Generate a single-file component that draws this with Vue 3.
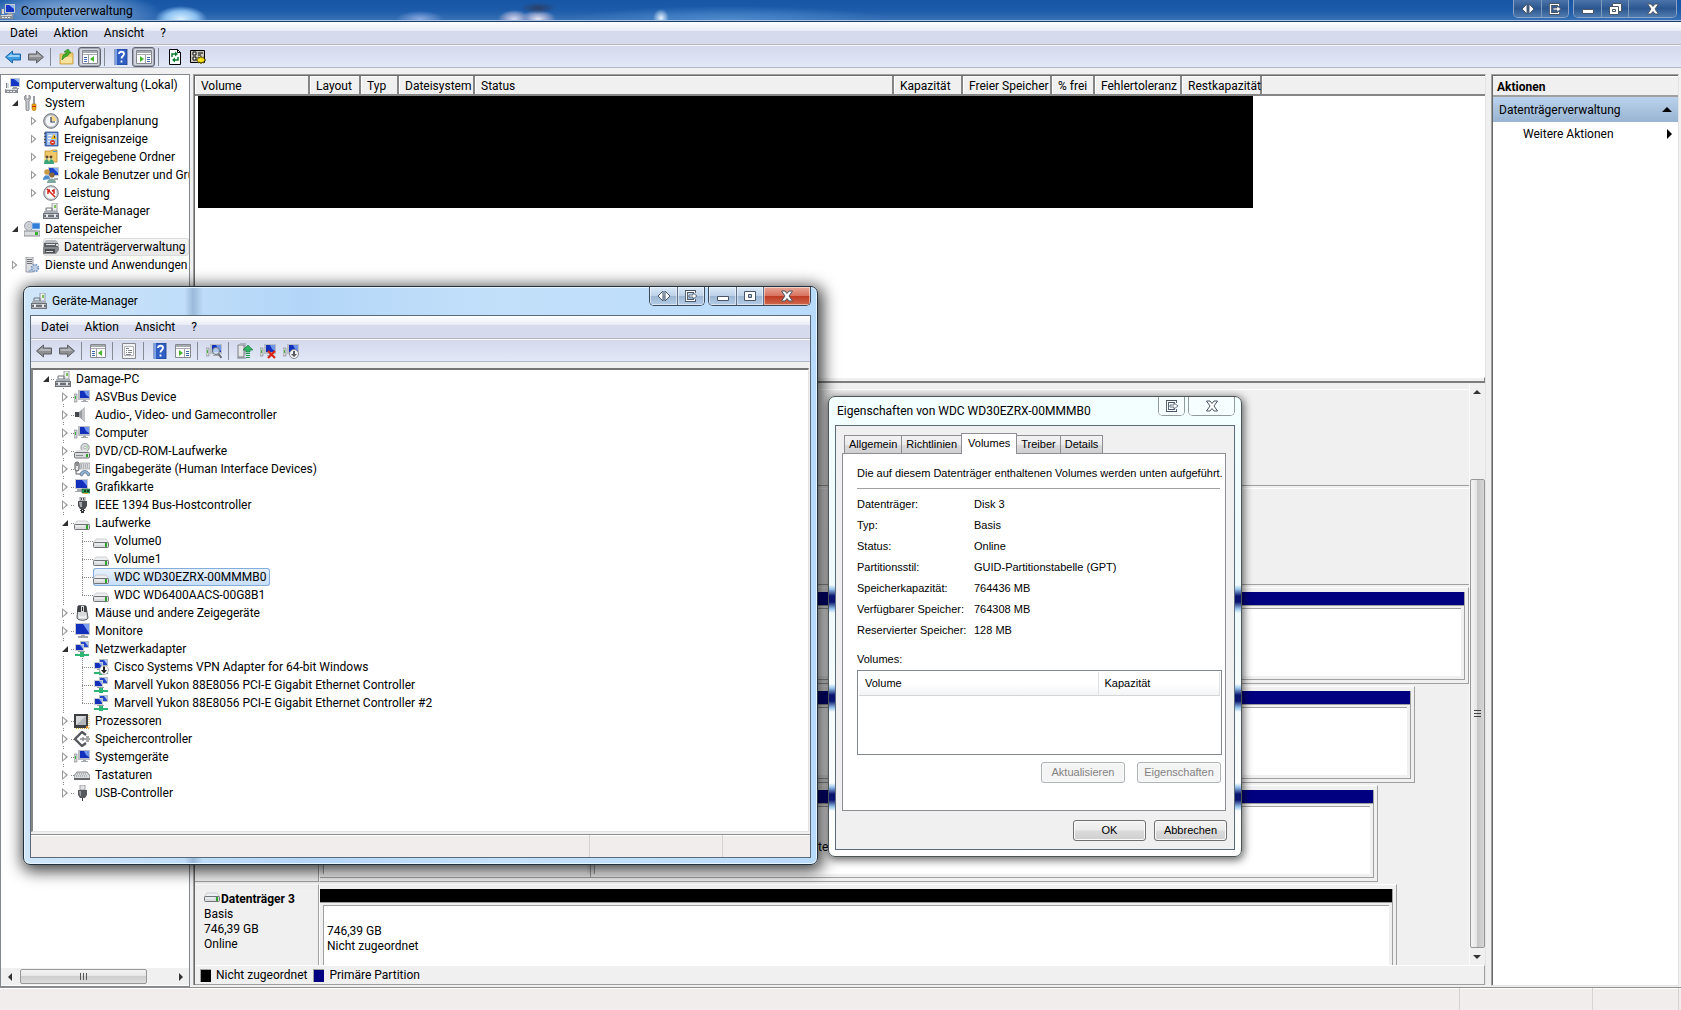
<template>
  <div class="desktop">
    <!-- Icon definitions -->
    <svg class="defs" aria-hidden="true">
      <symbol id="i-comp" viewBox="0 0 16 16">
        <path d="M5 1h10v9H5z" fill="#c4c8d0" />
        <path d="M6 2h8v7H6z" fill="#1537c4" />
        <path d="M9 2h5v4z" fill="#8fb4f5" />
        <path d="M8 10h4v1h2v1H7v-1h1z" fill="#9a9ea6" />
        <path d="M1 6h3v5H1z" fill="#d8dadd" />
        <path d="M1 6h1v5H1z" fill="#7e8288" />
        <path d="M0 12h13v4H0z" fill="#8b8f95" />
        <path d="M1 12h11v1H1z" fill="#d9dbde" />
        <path d="M2 14h2v1H2zM5 14h2v1H5zM8 14h2v1H8z" fill="#e9eaec" />
      </symbol>
      <symbol id="i-pc" viewBox="0 0 16 16">
        <path d="M4 1h12v10H4z" fill="#b9bdc4" />
        <path d="M6 2h9v7H6z" fill="#1330bd" />
        <path d="M10 2h5v6l-3-2z" fill="#6f93ec" />
        <path d="M9 11h3v1h2v1H7v-1h2z" fill="#a5a8ad" />
        <path d="M0 5h3v8H0z" fill="#d3d5d8" stroke="#7d8086" stroke-width=".6" />
        <path d="M1 7h1v3H1z" fill="#3cb43c" />
      </symbol>
      <symbol id="i-tools" viewBox="0 0 16 16">
        <path d="M1 1l1-1v4h3V0c2 1 2 4 0 6v9c0 1-3 1-3 0V6C0 5 0 2 1 1z" fill="#c9ccd1" stroke="#70747a" stroke-width=".8" />
        <path d="M9 1h2v8H9z" fill="#9a9ea4" />
        <path d="M8 9h4v5c0 2-4 2-4 0z" fill="#f0a712" stroke="#a86d05" stroke-width=".6" />
        <path d="M8 11h4v1H8z" fill="#c22a10" />
      </symbol>
      <symbol id="i-clock" viewBox="0 0 16 16">
        <circle cx="8" cy="8" r="7.3" fill="#b9bdc4" stroke="#70747a" stroke-width="1" />
        <circle cx="8" cy="8" r="5.5" fill="#f4f6fa" />
        <path d="M8 2.5A5.5 5.5 0 0 1 13.5 8H8z" fill="#f3d88c" />
        <path d="M8 4v5h4" fill="none" stroke="#33405a" stroke-width="1.2" />
      </symbol>
      <symbol id="i-event" viewBox="0 0 16 16">
        <path d="M2 1h13v14H2z" fill="#4f7fc6" stroke="#2d4f8c" stroke-width=".8" />
        <path d="M4 2h10v12H4z" fill="#a9c3e8" />
        <path d="M1 2h2v1H1zM1 5h2v1H1zM1 8h2v1H1zM1 11h2v1H1z" fill="#555" />
        <path d="M5 4h4v1H5zM5 7h3v1H5zM5 10h3v1H5z" fill="#f2f6fc" />
        <path d="M11 3l3 5H8z" fill="#f5bd1b" />
        <path d="M11 5h1v2h-1z" fill="#333" />
        <circle cx="9.5" cy="11.5" r="2.5" fill="#d83420" />
        <path d="M8.5 11h2v1h-2z" fill="#fff" />
      </symbol>
      <symbol id="i-share" viewBox="0 0 16 16">
        <path d="M2 2h6l1-1h5v12H2z" fill="#f0c868" stroke="#b98a2a" stroke-width=".8" />
        <path d="M10 2h4v1h-4z" fill="#4a9fe0" />
        <path d="M1 8h9v5H1z" fill="#f8e09a" />
        <circle cx="4" cy="8" r="1.5" fill="#5a4632" />
        <circle cx="8" cy="8" r="1.5" fill="#5a4632" />
        <path d="M1 15c0-6 5-6 5-1 0-5 5-5 5 1z" fill="#3aa57c" />
      </symbol>
      <symbol id="i-users" viewBox="0 0 16 16">
        <path d="M5 0h11v9H5z" fill="#c6c9ce" />
        <path d="M6 1h9v7H6z" fill="#1c46c9" />
        <path d="M10 1h5v5z" fill="#84abf3" />
        <circle cx="4" cy="5" r="2.8" fill="#c89a42" />
        <circle cx="9" cy="8" r="2.6" fill="#8c6a3c" />
        <path d="M0 13c0-6 7-6 7-1z" fill="#4f8ccf" />
        <path d="M4 16c0-6 9-6 9 0z" fill="#7da7a0" />
        <path d="M11 11h4v2h-4z" fill="#a5a8ad" />
      </symbol>
      <symbol id="i-perf" viewBox="0 0 16 16">
        <circle cx="8" cy="8" r="7.3" fill="#c9ccd1" stroke="#787c82" />
        <circle cx="8" cy="8" r="5.5" fill="#fff" />
        <path d="M4 4l8 8M5 9V5h2M9 6l2-1v4" fill="none" stroke="#d32218" stroke-width="1.5" />
      </symbol>
      <symbol id="i-devmgr" viewBox="0 0 16 16">
        <path d="M9 0h5v8H9z" fill="#eceef0" stroke="#8b8e93" stroke-width=".8" />
        <path d="M11 2h2v3h-2z" fill="#7cc45a" />
        <path d="M3 5h6v3H3z" fill="none" stroke="#6f7378" />
        <path d="M1 8h14v2H1z" fill="#a9b0b8" />
        <path d="M0 10h16v6H0z" fill="#6c7178" />
        <path d="M1 11h14v1H1zM1 14h14v1H1z" fill="#b9bdc3" />
        <path d="M3 11h2v3H3zM11 11h2v3h-2z" fill="#e8e9eb" />
      </symbol>
      <symbol id="i-storage" viewBox="0 0 16 16">
        <circle cx="5" cy="5" r="4.5" fill="#d2d6dc" stroke="#85898f" stroke-width=".8" />
        <circle cx="5" cy="5" r="1.3" fill="#fff" stroke="#85898f" stroke-width=".5" />
        <path d="M8 2h8v6H8z" fill="#2f7fd8" stroke="#a9c8ea" stroke-width=".8" />
        <path d="M0 10h16v5H0z" fill="#d9dbde" stroke="#74787e" stroke-width=".8" />
        <path d="M11 11h3v3h-3z" fill="#37b32c" />
        <path d="M2 9h11v1H2z" fill="#b3b7bc" />
      </symbol>
      <symbol id="i-diskmgr" viewBox="0 0 16 16">
        <path d="M3 1h10l3 4v3H0V5z" fill="#babdc2" />
        <path d="M1 4h14v4H1z" fill="#5d6166" />
        <path d="M3 5h9v1H3z" fill="#e6e7e9" />
        <path d="M0 8h16v3l-3 4H0z" fill="#85898e" />
        <path d="M2 10h10v4H2z" fill="#4d5055" />
        <path d="M3 12h7v1H3z" fill="#d3d5d7" />
        <path d="M13 5h2v2h-2z" fill="#d9d9d9" />
      </symbol>
      <symbol id="i-services" viewBox="0 0 16 16">
        <path d="M2 0h7v15H2z" fill="#dcdee1" stroke="#8a8e94" stroke-width=".8" />
        <path d="M3 2h5v1H3zM3 4h5v1H3zM3 6h5v1H3z" fill="#6f7378" />
        <circle cx="11" cy="11" r="3.3" fill="#cfe0f2" stroke="#7b9ac2" stroke-width="2" stroke-dasharray="1.6 1" />
        <circle cx="11" cy="11" r="1.2" fill="#fff" stroke="#6f8fb8" stroke-width=".6" />
        <circle cx="6" cy="14" r="1.5" fill="#9db4d2" />
      </symbol>
      <symbol id="i-drive" viewBox="0 0 16 16">
        <path d="M3 6h10l3 4H0z" fill="#eeeff0" stroke="#b5b7ba" stroke-width=".6" />
        <rect x=".5" y="9.5" width="15" height="5" rx="1" fill="#d9dbdd" stroke="#707377" />
        <path d="M1.5 10.5h9v1h-9z" fill="#f8f8f9" />
        <path d="M12 10h2v4h-2z" fill="#2fa52b" />
      </symbol>
      <symbol id="i-disc" viewBox="0 0 16 16">
        <circle cx="11" cy="4.5" r="4.2" fill="#d5d9dc" stroke="#8a8d91" stroke-width=".8" />
        <circle cx="11" cy="4.5" r="1.2" fill="#fff" stroke="#85888d" stroke-width=".5" />
        <path d="M8 3l2 2zM12 3l2-1v4z" fill="#a8dba9" />
        <path d="M3 7h9l4 3H0z" fill="#e3e4e6" />
        <rect x=".5" y="9.5" width="15" height="5.5" rx="1" fill="#d9dbdd" stroke="#707377" />
        <path d="M2 12h7v1H2z" fill="#8a8d91" />
        <path d="M12 11h2v3h-2z" fill="#2fa52b" />
      </symbol>
      <symbol id="i-audio" viewBox="0 0 16 16">
        <path d="M1 5h4l6-5v15l-6-5H1z" fill="#9a9da2" />
        <path d="M1 5h4v5H1z" fill="#44474c" />
        <path d="M8 3l3-3v15l-3-3z" fill="#c3c5c8" />
      </symbol>
      <symbol id="i-hid" viewBox="0 0 16 16">
        <rect x="1" y="1" width="4" height="9" rx="2" fill="#e6e7e8" stroke="#4c4f54" />
        <path d="M3 2v3" stroke="#333" />
        <path d="M2 10v3h4" fill="none" stroke="#5c5f64" />
        <path d="M6 2h10v6H6z" fill="#d8dadd" stroke="#8a8d91" stroke-width=".6" />
        <path d="M7 4h8M7 6h8" stroke="#85888d" stroke-dasharray="1 1" />
        <path d="M6 14c0-6 9-6 10 0l-2 1-2-3h-2l-2 3z" fill="#8fb3d4" stroke="#52667d" stroke-width=".7" />
      </symbol>
      <symbol id="i-gpu" viewBox="0 0 16 16">
        <path d="M1 0h13v10H1z" fill="#c6c9ce" />
        <path d="M2 1h11v8H2z" fill="#1330bd" />
        <path d="M8 1h5v6z" fill="#6f93ec" />
        <path d="M3 10h5v3H1v-1h2z" fill="#a5a8ad" />
        <path d="M8 10h8v4H8z" fill="#2a9c55" stroke="#1c5f35" stroke-width=".6" />
        <path d="M10 11h2v2h-2zM13 11h2v2h-2z" fill="#163b24" />
        <path d="M9 14h5v1H9z" fill="#e0b53a" />
      </symbol>
      <symbol id="i-plug" viewBox="0 0 16 16">
        <path d="M6 0h5v4H6z" fill="#dcdddf" stroke="#6e7176" stroke-width=".8" />
        <path d="M7 1h1v2H7zM9 1h1v2H9z" fill="#555" />
        <path d="M4 4h9v5l-2 3H6L4 9z" fill="#4a4d52" />
        <path d="M5 5h3v5H6z" fill="#a5a8ac" />
        <path d="M7 12h3v1H7zM6 13h2v1H6zM9 13h2v1H9zM7 14h3v2H7z" fill="#33363a" />
      </symbol>
      <symbol id="i-usb" viewBox="0 0 16 16">
        <path d="M6 0h5v5H6z" fill="#e2e3e5" stroke="#8b8e93" stroke-width=".8" />
        <path d="M4 5h9v5l-2 3H6l-2-3z" fill="#55585d" />
        <path d="M5 6h2v5H6z" fill="#9b9ea2" />
        <path d="M8 13h1v3H8z" fill="#33363a" />
      </symbol>
      <symbol id="i-mouse" viewBox="0 0 16 16">
        <path d="M4 1c2-1 7-1 8 0l2 12c-1 3-10 3-11 0z" fill="#d6d8da" stroke="#55585d" />
        <path d="M4 1h3v6H3zM10 1h2l1 6h-3z" fill="#3d4045" />
        <path d="M8 2h1v4H8z" fill="#222" />
        <path d="M5 10c2 2 5 2 7 0v3H5z" fill="#f4f4f5" />
      </symbol>
      <symbol id="i-monitor" viewBox="0 0 16 16">
        <path d="M1 0h15v12H1z" fill="#c6c9ce" />
        <path d="M2 1h13v10H2z" fill="#1330bd" />
        <path d="M9 1h6v9z" fill="#7c9ff0" />
        <path d="M7 12h4v1h3v2H4v-2h3z" fill="#a5a8ad" />
      </symbol>
      <symbol id="i-net" viewBox="0 0 16 16">
        <path d="M6 0h9v7H6z" fill="#b9bdc4" />
        <path d="M7 1h7v5H7z" fill="#2448c8" />
        <path d="M11 1h3v4z" fill="#a9c3f7" />
        <path d="M1 3h9v7H1z" fill="#c8cbd0" />
        <path d="M2 4h7v5H2z" fill="#1330bd" />
        <path d="M6 4h3v4z" fill="#8fadf3" />
        <path d="M4 10h7v1H4z" fill="#9a9da2" />
        <path d="M6 11h4v2h5v2h-5v1H6v-1H1v-2h5z" fill="#2db574" />
      </symbol>
      <symbol id="i-netdown" viewBox="0 0 16 16">
        <use href="#i-net" />
        <circle cx="11" cy="11" r="4.5" fill="#f5f5f6" stroke="#a4a6a9" stroke-width=".8" />
        <path d="M10 7.5h2V11h2l-3 3.5L8 11h2z" fill="#222" />
      </symbol>
      <symbol id="i-cpu" viewBox="0 0 16 16">
        <path d="M0 1h14v14H0z" fill="#3c3e41" />
        <path d="M2 3h10v9H2z" fill="#b4b7ba" />
        <path d="M2 3h10l-10 9z" fill="#d5d7d9" />
        <path d="M15 2v13M2 15.5h13" stroke="#d4a640" stroke-dasharray="1 1" />
        <path d="M12 13h2v2h-2z" fill="#e88a2a" />
      </symbol>
      <symbol id="i-memctl" viewBox="0 0 16 16">
        <path d="M12 4L8 1 1 8l7 7 4-3" fill="none" stroke="#55585c" stroke-width="2.4" />
        <path d="M6 8h10M9 6v4M12 6h3M12 10h3" stroke="#8a8d91" stroke-width="1.5" fill="none" />
      </symbol>
      <symbol id="i-kbd" viewBox="0 0 16 16">
        <path d="M3 5h10l3 4v3H0V9z" fill="#dadcde" stroke="#6c6f73" stroke-width=".8" />
        <path d="M3 7h10M2 9h12" stroke="#8b8e92" stroke-dasharray="1 1" />
        <path d="M0 11h16v2H0z" fill="#63666a" />
      </symbol>
      <symbol id="i-back" viewBox="0 0 16 14">
        <path d="M.5 7l7-6v3h8v6h-8v3z" fill="#3d9be0" stroke="#1c64a8" />
        <path d="M2.5 7l4-3.500V5h8v2z" fill="#9ad2f7" />
      </symbol>
      <symbol id="i-backoff" viewBox="0 0 16 14">
        <path d="M.5 7l7-6v3h8v6h-8v3z" fill="#8d8f93" stroke="#5e6064" />
        <path d="M2.5 7l4-3.500V5h8v2z" fill="#b4b6b9" />
      </symbol>
      <symbol id="i-fwd" viewBox="0 0 16 14">
        <path d="M15.500 7l-7-6v3h-8v6h8v3z" fill="#8d8f93" stroke="#5e6064" />
        <path d="M13.500 7l-4-3.500V5h-8v2z" fill="#b4b6b9" />
      </symbol>
      <symbol id="i-up" viewBox="0 0 16 16">
        <path d="M1 5h5l1-1h7v11H1z" fill="#f2cf72" stroke="#c39a3a" stroke-width=".8" />
        <path d="M2 8h11v6H2z" fill="#f8e2a0" />
        <path d="M3 11c0-4 1-6 4-6V3H5l4-3 3 4h-2c0 3-2 3-4 4z" fill="#43b02a" stroke="#27751a" stroke-width=".6" />
      </symbol>
      <symbol id="i-panel-l" viewBox="0 0 16 16">
        <path d="M.5 1.500h15v13H.5z" fill="#fff" stroke="#85898f" />
        <path d="M1 2h14v2H1z" fill="#a7abb1" />
        <path d="M1 5h14v1H1z" fill="#a7abb1" />
        <path d="M2 8h3v1H2zM2 10h3v1H2zM2 12h3v1H2z" fill="#3a66b0" />
        <path d="M6 6h1v8H6z" fill="#9ca0a6" />
        <path d="M12 7v6l-4-3z" fill="#45b52e" />
      </symbol>
      <symbol id="i-panel-r" viewBox="0 0 16 16">
        <path d="M.5 1.500h15v13H.5z" fill="#fff" stroke="#85898f" />
        <path d="M1 2h14v2H1z" fill="#a7abb1" />
        <path d="M1 5h14v1H1z" fill="#a7abb1" />
        <path d="M11 8h3v1h-3zM11 10h3v1h-3zM11 12h3v1h-3z" fill="#3a66b0" />
        <path d="M9 6h1v8H9z" fill="#9ca0a6" />
        <path d="M4 7v6l4-3z" fill="#45b52e" />
      </symbol>
      <symbol id="i-props" viewBox="0 0 16 16">
        <path d="M1.500.5h13v15h-13z" fill="#f1f2f4" stroke="#85898f" />
        <path d="M3.500 3.500h9v9h-9z" fill="#fff" stroke="#b0b3b8" />
        <path d="M5 5h3v1H5zM5 7h1v1H5zM7 7h4v1H7zM5 9h1v1H5zM7 9h4v1H7zM5 11h5v1H5z" fill="#7f838a" />
      </symbol>
      <symbol id="i-help" viewBox="0 0 16 16">
        <path d="M2 0h12v16H2z" fill="#2f5fc4" stroke="#1c3c88" stroke-width=".8" />
        <path d="M2 0h2v16H2z" fill="#7ea0e0" />
        <path d="M6 5c0-3 5-3 5 0 0 2-2.500 2-2.500 4.500M8.500 11.500v2" fill="none" stroke="#fff" stroke-width="1.8" />
      </symbol>
      <symbol id="i-refresh" viewBox="0 0 16 16">
        <path d="M2.500.5h8l3 3v12h-11z" fill="#fff" stroke="#000" />
        <path d="M10.500.5v3h3" fill="none" stroke="#000" />
        <path d="M5 8V5h4" fill="none" stroke="#0a7d2c" stroke-width="1.5" />
        <path d="M8 2.500v5L11 5zM8 8.500v5L5 11z" fill="#0a7d2c" />
        <path d="M11 8v3H7" fill="none" stroke="#0a7d2c" stroke-width="1.5" />
      </symbol>
      <symbol id="i-settings" viewBox="0 0 16 16">
        <path d="M.5 1.500h14v12H.5z" fill="#c9c7bc" stroke="#000" />
        <path d="M3 3h3v3H3zM3 8h3v3H3z" fill="#fff" stroke="#000" />
        <path d="M8 4h5M8 6h3M8 9h2" stroke="#000" />
        <path d="M11 7l1 2 2-1v2l2 1-2 1v2l-2-1-1 2-1-2-2 1v-2l-2-1 2-1V8l2 1z" fill="#f5e21c" stroke="#3a3200" stroke-width=".7" />
      </symbol>
      <symbol id="i-scan" viewBox="0 0 16 16">
        <use href="#i-pc" />
        <circle cx="10" cy="8" r="3.5" fill="#d6ebfb" fill-opacity=".8" stroke="#70757b" />
        <path d="M12.500 11l3 4" stroke="#6c7076" stroke-width="2" />
      </symbol>
      <symbol id="i-update" viewBox="0 0 16 16">
        <path d="M1 2h6v12H1z" fill="#e4e6e8" stroke="#787c82" />
        <path d="M3 0h5v12" fill="none" stroke="#8c9096" />
        <path d="M0 15h9" stroke="#787c82" />
        <path d="M11 2l5 5h-3v2H9V7H6z" fill="#2db565" stroke="#137238" stroke-width=".6" />
        <path d="M9 10h4v1H9zM9 12h4v1H9zM9 14h4v1H9z" fill="#1f9a50" />
      </symbol>
      <symbol id="i-remove" viewBox="0 0 16 16">
        <use href="#i-pc" />
        <path d="M8 8l7 7M15 8l-7 7" stroke="#de2416" stroke-width="2.2" />
      </symbol>
      <symbol id="i-disable" viewBox="0 0 16 16">
        <use href="#i-pc" />
        <circle cx="11" cy="11" r="4.5" fill="#f1f2f3" stroke="#85888c" />
        <path d="M10 8h2v3h2l-3 3-3-3h2z" fill="#55585c" />
      </symbol>
      <!-- Caption glyphs -->
      <symbol id="g-swap" viewBox="0 0 14 12">
        <path d="M6 1v10L1 6zM8 1v10l5-5z" fill="#fff" stroke="#4a5666" />
      </symbol>
      <symbol id="g-exit" viewBox="0 0 14 12">
        <path d="M10.500 3V1.500h-8v9h8V9" fill="none" stroke="#4a5666" stroke-width="3" />
        <path d="M10.500 3V1.500h-8v9h8V9" fill="none" stroke="#fff" stroke-width="1.2" />
        <path d="M5 5h4V3l4 3-4 3V7H5z" fill="#fff" stroke="#4a5666" stroke-width=".8" />
      </symbol>
      <symbol id="g-min" viewBox="0 0 14 12">
        <path d="M1.500 6.500h11v4h-11z" fill="#fff" stroke="#4a5666" />
      </symbol>
      <symbol id="g-max" viewBox="0 0 14 12">
        <path d="M1.500 1.500h11v9h-11zM5.500 4.500v3h3v-3z" fill="#fff" fill-rule="evenodd" stroke="#4a5666" />
      </symbol>
      <symbol id="g-restore" viewBox="0 0 14 12">
        <path d="M4.500.5h9v8h-9z" fill="#fff" stroke="#4a5666" />
        <path d="M1.500 3.500h9v8h-9zM4.500 6.500v2h3v-2z" fill="#fff" fill-rule="evenodd" stroke="#4a5666" />
      </symbol>
      <symbol id="g-close" viewBox="0 0 14 12">
        <path d="M1.500 1h3.500l2 2.500L9 1h3.500L9 6l3.500 5H9L7 8.500 5 11H1.500L5 6z" fill="#fff" stroke="#4a5666" />
      </symbol>
    </svg>

    <!-- Computerverwaltung -->
    <header class="main-title">
      <svg class="icon"><use href="#i-comp" /></svg>
      <h1>Computerverwaltung</h1>
      <div class="caption caption-dark">
        <div class="caption-group">
          <button aria-label="Wechseln"><svg><use href="#g-swap" /></svg></button>
          <button aria-label="Verschieben"><svg><use href="#g-exit" /></svg></button>
        </div>
        <div class="caption-group">
          <button aria-label="Minimieren"><svg><use href="#g-min" /></svg></button>
          <button aria-label="Wiederherstellen"><svg><use href="#g-restore" /></svg></button>
          <button class="wide" aria-label="Schließen"><svg><use href="#g-close" /></svg></button>
        </div>
      </div>
    </header>
    <nav class="menu">
      <button v-for="entry in menu" :key="entry">{{ entry }}</button>
    </nav>
    <div class="toolbar">
      <template v-for="(tool, i) in mainTools" :key="i">
        <span v-if="tool.sep" class="tool-sep"></span>
        <button v-else :class="['tool', { pressed: tool.pressed }]" :aria-label="tool.label">
          <svg class="icon"><use :href="'#i-' + tool.icon" /></svg>
        </button>
      </template>
    </div>

    <main class="panes">
      <aside class="nav-pane">
        <ul class="nav-tree">
          <li v-for="node in navNodes" :key="node.label" class="row">
            <span v-for="n in node.level" :key="n" class="cell">
              <i v-if="n === node.level && node.state" :class="['arrow', node.state]"></i>
            </span>
            <span :class="['node', { current: node.current }]">
              <svg class="icon"><use :href="'#i-' + node.icon" /></svg>
              <span class="label">{{ node.label }}</span>
            </span>
          </li>
        </ul>
        <div class="hscroll">
          <button class="scroll-btn" aria-label="Nach links"><i class="tri left"></i></button>
          <div class="hthumb"><i></i><i></i><i></i></div>
          <span class="htrack"></span>
          <button class="scroll-btn" aria-label="Nach rechts"><i class="tri right"></i></button>
        </div>
      </aside>

      <section class="disk-pane">
        <div class="volume-list">
          <table>
            <colgroup>
              <col v-for="col in columns" :key="col.name" :style="{ width: col.width + 'px' }" />
              <col />
            </colgroup>
            <thead>
              <tr>
                <th v-for="col in columns" :key="col.name">{{ col.name }}</th>
                <th class="rest"></th>
              </tr>
            </thead>
          </table>
          <div class="blackout"></div>
        </div>
        <div class="splitter"></div>
        <div class="disk-view">
          <div class="disk-rows">
            <div v-for="(disk, i) in disks" :key="i" class="disk">
              <div class="disk-label">
                <template v-if="disk.name">
                  <strong><svg class="icon"><use href="#i-drive" /></svg>{{ disk.name }}</strong>
                  <span v-for="line in disk.info" :key="line">{{ line }}</span>
                </template>
              </div>
              <div class="disk-space">
                <div
                  :class="['disk-box', { empty: !disk.volumes.length }]"
                  :style="{ width: disk.width + '%' }"
                >
                  <div
                    v-for="(vol, v) in disk.volumes"
                    :key="v"
                    class="volume"
                    :style="{ flexGrow: vol.share }"
                  >
                    <div :class="['volume-bar', vol.kind]"></div>
                    <div class="volume-body">
                      <div class="volume-text">
                        <span v-for="line in vol.lines" :key="line">{{ line }}</span>
                      </div>
                    </div>
                  </div>
                </div>
              </div>
            </div>
          </div>
          <div class="vscroll">
            <button class="scroll-btn" aria-label="Nach oben"><i class="tri up"></i></button>
            <span class="vtrack"></span>
            <div class="vthumb"><i></i><i></i><i></i></div>
            <button class="scroll-btn" aria-label="Nach unten"><i class="tri down"></i></button>
          </div>
        </div>
        <div class="legend">
          <i class="swatch free"></i><span>Nicht zugeordnet</span>
          <i class="swatch primary"></i><span>Primäre Partition</span>
        </div>
      </section>

      <aside class="action-pane">
        <h2>Aktionen</h2>
        <button class="action-head">Datenträgerverwaltung<i class="solid up"></i></button>
        <button class="action-item">Weitere Aktionen<i class="solid right"></i></button>
      </aside>
    </main>
    <footer class="main-status"><span></span><span></span><span></span></footer>

    <!-- Geräte-Manager -->
    <section class="window manager">
      <header class="win-title">
        <svg class="icon"><use href="#i-devmgr" /></svg>
        <h2>Geräte-Manager</h2>
        <div class="caption">
          <div class="caption-group">
            <button aria-label="Wechseln"><svg><use href="#g-swap" /></svg></button>
            <button aria-label="Verschieben"><svg><use href="#g-exit" /></svg></button>
          </div>
          <div class="caption-group">
            <button aria-label="Minimieren"><svg><use href="#g-min" /></svg></button>
            <button aria-label="Maximieren"><svg><use href="#g-max" /></svg></button>
            <button class="wide close" aria-label="Schließen"><svg><use href="#g-close" /></svg></button>
          </div>
        </div>
      </header>
      <div class="client">
        <nav class="menu">
          <button v-for="entry in menu" :key="entry">{{ entry }}</button>
        </nav>
        <div class="toolbar">
          <template v-for="(tool, i) in deviceTools" :key="i">
            <span v-if="tool.sep" class="tool-sep"></span>
            <button v-else class="tool" :aria-label="tool.label">
              <svg class="icon"><use :href="'#i-' + tool.icon" /></svg>
            </button>
          </template>
        </div>
        <ul class="device-tree">
          <li v-for="dev in devices" :key="dev.label" class="row">
            <span v-if="dev.level > 0" class="cell"></span>
            <span v-if="dev.level === 2" class="cell guide"></span>
            <span :class="['cell', 'dots', { guide: dev.level > 0, last: dev.last, plate: dev.state }]">
              <i v-if="dev.state" :class="['arrow', dev.state]"></i>
            </span>
            <span :class="['node', { selected: dev.selected }]">
              <svg class="icon"><use :href="'#i-' + dev.icon" /></svg>
              <span class="label">{{ dev.label }}</span>
            </span>
          </li>
        </ul>
        <footer class="win-status"><span></span><span></span><span></span></footer>
      </div>
    </section>

    <!-- Eigenschaften -->
    <section class="window dialog">
      <header class="win-title">
        <h2>Eigenschaften von WDC WD30EZRX-00MMMB0</h2>
        <div class="caption caption-plain">
          <div class="caption-group">
            <button aria-label="Verschieben"><svg><use href="#g-exit" /></svg></button>
          </div>
          <div class="caption-group">
            <button class="wide" aria-label="Schließen"><svg><use href="#g-close" /></svg></button>
          </div>
        </div>
      </header>
      <div class="client">
        <div class="tabs" role="tablist">
          <button
            v-for="tab in tabs"
            :key="tab"
            role="tab"
            :class="{ active: tab === activeTab }"
            @click="activeTab = tab"
          >{{ tab }}</button>
        </div>
        <div class="tab-page">
          <p>Die auf diesem Datenträger enthaltenen Volumes werden unten aufgeführt.</p>
          <hr />
          <dl>
            <template v-for="fact in facts" :key="fact.name">
              <dt>{{ fact.name }}</dt>
              <dd>{{ fact.value }}</dd>
            </template>
          </dl>
          <h3>Volumes:</h3>
          <div class="dialog-list">
            <table>
              <thead>
                <tr><th>Volume</th><th>Kapazität</th></tr>
              </thead>
            </table>
          </div>
          <div class="page-buttons">
            <button disabled>Aktualisieren</button>
            <button disabled>Eigenschaften</button>
          </div>
        </div>
        <div class="dialog-buttons">
          <button>OK</button>
          <button>Abbrechen</button>
        </div>
      </div>
    </section>
  </div>
</template>

<script setup>
import { ref } from 'vue'

const menu = ['Datei', 'Aktion', 'Ansicht', '?']

const mainTools = [
  { icon: 'back', label: 'Zurück' },
  { icon: 'fwd', label: 'Vorwärts' },
  { sep: true },
  { icon: 'up', label: 'Nach oben' },
  { icon: 'panel-l', label: 'Konsolenstruktur', pressed: true },
  { sep: true },
  { icon: 'help', label: 'Hilfe' },
  { icon: 'panel-r', label: 'Aktionsbereich', pressed: true },
  { sep: true },
  { icon: 'refresh', label: 'Aktualisieren' },
  { icon: 'settings', label: 'Einstellungen' }
]

const deviceTools = [
  { icon: 'backoff', label: 'Zurück' },
  { icon: 'fwd', label: 'Vorwärts' },
  { sep: true },
  { icon: 'panel-l', label: 'Konsolenstruktur' },
  { sep: true },
  { icon: 'props', label: 'Eigenschaften' },
  { sep: true },
  { icon: 'help', label: 'Hilfe' },
  { icon: 'panel-r', label: 'Aktionsbereich' },
  { sep: true },
  { icon: 'scan', label: 'Nach geänderter Hardware suchen' },
  { sep: true },
  { icon: 'update', label: 'Treibersoftware aktualisieren' },
  { icon: 'remove', label: 'Deinstallieren' },
  { icon: 'disable', label: 'Deaktivieren' }
]

const navNodes = [
  { level: 0, icon: 'comp', label: 'Computerverwaltung (Lokal)' },
  { level: 1, icon: 'tools', label: 'System', state: 'open' },
  { level: 2, icon: 'clock', label: 'Aufgabenplanung', state: 'closed' },
  { level: 2, icon: 'event', label: 'Ereignisanzeige', state: 'closed' },
  { level: 2, icon: 'share', label: 'Freigegebene Ordner', state: 'closed' },
  { level: 2, icon: 'users', label: 'Lokale Benutzer und Gruppen', state: 'closed' },
  { level: 2, icon: 'perf', label: 'Leistung', state: 'closed' },
  { level: 2, icon: 'devmgr', label: 'Geräte-Manager' },
  { level: 1, icon: 'storage', label: 'Datenspeicher', state: 'open' },
  { level: 2, icon: 'diskmgr', label: 'Datenträgerverwaltung', current: true },
  { level: 1, icon: 'services', label: 'Dienste und Anwendungen', state: 'closed' }
]

const columns = [
  { name: 'Volume', width: 114 },
  { name: 'Layout', width: 51 },
  { name: 'Typ', width: 38 },
  { name: 'Dateisystem', width: 76 },
  { name: 'Status', width: 419 },
  { name: 'Kapazität', width: 69 },
  { name: 'Freier Speicher', width: 89 },
  { name: '% frei', width: 43 },
  { name: 'Fehlertoleranz', width: 87 },
  { name: 'Restkapazität', width: 80 }
]

const disks = [
  { width: 100, volumes: [] },
  { width: 100, volumes: [] },
  { width: 100, volumes: [{ share: 1, kind: 'primary', lines: [] }] },
  { width: 95.3, volumes: [{ share: 1, kind: 'primary', lines: [] }] },
  {
    width: 92.1,
    volumes: [
      { share: 27, kind: 'primary', lines: [] },
      {
        share: 78,
        kind: 'primary',
        lines: ['596,07 GB NTFS', 'Fehlerfrei (Startpartition, Auslagerungsdatei, Primäre Partition)']
      }
    ]
  },
  {
    name: 'Datenträger 3',
    info: ['Basis', '746,39 GB', 'Online'],
    width: 93.7,
    volumes: [{ share: 1, kind: 'free', lines: ['746,39 GB', 'Nicht zugeordnet'] }]
  }
]

const devices = [
  { level: 0, icon: 'devmgr', label: 'Damage-PC', state: 'open' },
  { level: 1, icon: 'pc', label: 'ASVBus Device', state: 'closed' },
  { level: 1, icon: 'audio', label: 'Audio-, Video- und Gamecontroller', state: 'closed' },
  { level: 1, icon: 'pc', label: 'Computer', state: 'closed' },
  { level: 1, icon: 'disc', label: 'DVD/CD-ROM-Laufwerke', state: 'closed' },
  { level: 1, icon: 'hid', label: 'Eingabegeräte (Human Interface Devices)', state: 'closed' },
  { level: 1, icon: 'gpu', label: 'Grafikkarte', state: 'closed' },
  { level: 1, icon: 'plug', label: 'IEEE 1394 Bus-Hostcontroller', state: 'closed' },
  { level: 1, icon: 'drive', label: 'Laufwerke', state: 'open' },
  { level: 2, icon: 'drive', label: 'Volume0' },
  { level: 2, icon: 'drive', label: 'Volume1' },
  { level: 2, icon: 'drive', label: 'WDC WD30EZRX-00MMMB0', selected: true },
  { level: 2, icon: 'drive', label: 'WDC WD6400AACS-00G8B1', last: true },
  { level: 1, icon: 'mouse', label: 'Mäuse und andere Zeigegeräte', state: 'closed' },
  { level: 1, icon: 'monitor', label: 'Monitore', state: 'closed' },
  { level: 1, icon: 'net', label: 'Netzwerkadapter', state: 'open' },
  { level: 2, icon: 'netdown', label: 'Cisco Systems VPN Adapter for 64-bit Windows' },
  { level: 2, icon: 'net', label: 'Marvell Yukon 88E8056 PCI-E Gigabit Ethernet Controller' },
  { level: 2, icon: 'net', label: 'Marvell Yukon 88E8056 PCI-E Gigabit Ethernet Controller #2', last: true },
  { level: 1, icon: 'cpu', label: 'Prozessoren', state: 'closed' },
  { level: 1, icon: 'memctl', label: 'Speichercontroller', state: 'closed' },
  { level: 1, icon: 'pc', label: 'Systemgeräte', state: 'closed' },
  { level: 1, icon: 'kbd', label: 'Tastaturen', state: 'closed' },
  { level: 1, icon: 'usb', label: 'USB-Controller', state: 'closed', last: true }
]

const tabs = ['Allgemein', 'Richtlinien', 'Volumes', 'Treiber', 'Details']
const activeTab = ref('Volumes')

const facts = [
  { name: 'Datenträger:', value: 'Disk 3' },
  { name: 'Typ:', value: 'Basis' },
  { name: 'Status:', value: 'Online' },
  { name: 'Partitionsstil:', value: 'GUID-Partitionstabelle (GPT)' },
  { name: 'Speicherkapazität:', value: '764436 MB' },
  { name: 'Verfügbarer Speicher:', value: '764308 MB' },
  { name: 'Reservierter Speicher:', value: '128 MB' }
]
</script>

<style>
html,
body {
  margin: 0;
  overflow: hidden;
}
</style>

<style scoped>
.desktop {
  position: relative;
  display: flex;
  flex-direction: column;
  height: 100vh;
  overflow: hidden;
  background: #f0f0f0;
  color: #000;
  font: 12px/18px Roboto, "Open Sans", sans-serif;
}

.desktop * {
  box-sizing: border-box;
}

.defs {
  position: absolute;
  width: 0;
  height: 0;
}

.icon {
  width: 16px;
  height: 16px;
  flex: none;
}

h1,
h2,
h3,
p,
ul,
dl,
dd {
  margin: 0;
  padding: 0;
  font-size: inherit;
  font-weight: normal;
}

ul {
  list-style: none;
}

button {
  margin: 0;
  padding: 0;
  border: 0;
  background: none;
  color: inherit;
  font: inherit;
}

table {
  width: 100%;
  border-collapse: collapse;
  table-layout: fixed;
}

th {
  font-weight: normal;
  text-align: left;
  white-space: nowrap;
}

/* Main title bar */
.main-title {
  display: flex;
  align-items: center;
  flex: none;
  height: 22px;
  padding-right: 4px;
  border-bottom: 1px solid #1c3c68;
  background:
    radial-gradient(ellipse 90px 20px at 70px 11px, rgba(160, 190, 225, .8), rgba(130, 168, 214, .55) 60%, transparent),
    radial-gradient(ellipse 26px 13px at 181px 19px, #d8f0ff, #8cc0f0 60%, transparent),
    radial-gradient(ellipse 24px 8px at 420px 19px, #8aa8e0, transparent),
    radial-gradient(ellipse 16px 9px at 514px 19px, #d4d8f0, #8098c8 60%, transparent),
    radial-gradient(ellipse 18px 6px at 538px 8px, #2c3f66, transparent),
    radial-gradient(ellipse 18px 9px at 538px 19px, #e4e4f4, #8098c8 60%, transparent),
    radial-gradient(ellipse 8px 9px at 661px 18px, #e4f2ff, transparent),
    radial-gradient(ellipse 160px 14px at 730px 20px, #4d8acb, transparent),
    linear-gradient(#1656a4, #1d5cab 50%, #3a72b5);
  box-shadow: inset 0 -1px #a9c4e4;
}

.main-title h1 {
  padding-left: 5px;
}

.caption {
  display: flex;
  gap: 3px;
  align-self: flex-start;
  margin-left: auto;
}

.caption-group {
  display: flex;
  border: 1px solid #3d4a5c;
  border-top: 0;
  border-radius: 0 0 5px 5px;
  overflow: hidden;
}

.caption button {
  display: flex;
  align-items: center;
  justify-content: center;
  width: 27px;
  height: 18px;
  border-left: 1px solid #5d6f86;
  background: linear-gradient(#d9e8f7, #bdd2e8 48%, #9cb6d2 50%, #b4cce6);
  box-shadow: inset 0 0 0 1px rgba(255, 255, 255, .5);
}

.caption button:first-child {
  border-left: 0;
}

.caption button.wide {
  width: 47px;
}

.caption button.close {
  background: linear-gradient(#e8a898, #d87360 48%, #bf3a22 50%, #cf6a4c);
}

.caption svg {
  width: 14px;
  height: 12px;
}

.caption-dark {
  gap: 4px;
}

.caption-dark .caption-group {
  border-color: #8aa3c4;
}

.caption-dark button {
  height: 17px;
  border-color: #7f9abd;
  background: linear-gradient(#4a74aa, #2c568f 50%, #4f7cb0);
  box-shadow: none;
}

.caption-dark button.wide {
  width: 48px;
}

.caption-plain .caption-group {
  border-color: #8f9a9c;
}

.caption-plain button {
  width: 25px;
  background: #f6feff;
}

.caption-plain button.wide {
  width: 45px;
}

/* Menu and toolbar */
.menu {
  display: flex;
  flex: none;
  height: 23px;
  padding-left: 2px;
  border-bottom: 1px solid #b6b8bc;
  background: linear-gradient(#fff, #e8ecf6 40%, #d5daec 41%, #d5daec);
}

.menu button {
  padding: 0 8px;
}

.toolbar {
  display: flex;
  align-items: center;
  flex: none;
  height: 23px;
  padding-left: 1px;
  border-top: 1px solid #f6f7fb;
  border-bottom: 1px solid #b2b8c6;
  background: linear-gradient(#d4d9ec, #e1e8f7);
}

.tool {
  display: flex;
  align-items: center;
  justify-content: center;
  width: 23px;
  height: 20px;
}

.tool.pressed {
  border: 1px solid #5f646d;
  border-radius: 3px;
  background: #d3d6e0;
  box-shadow: inset 0 0 0 1px #a3a7b2;
}

.tool-sep {
  width: 1px;
  height: 18px;
  margin: 0 4px 0 3px;
  background: #868a94;
}

/* Panes */
.panes {
  display: flex;
  flex: 1;
  min-height: 0;
  padding: 6px 2px 0 0;
}

.nav-pane {
  display: flex;
  flex-direction: column;
  width: 190px;
  margin-right: 3px;
  padding-bottom: 1px;
  flex: none;
  border: 1px solid #828790;
  background: #fff;
}

.nav-tree {
  flex: 1;
  padding: 1px 0 0 4px;
  overflow: hidden;
}

.row {
  display: flex;
  height: 18px;
  white-space: nowrap;
}

.cell {
  display: flex;
  align-items: center;
  justify-content: center;
  flex: none;
  width: 19px;
}

.node {
  display: flex;
  align-items: center;
}

.label {
  padding: 0 4px 0 5px;
}

.node.current {
  flex: 1;
  min-width: 0;
  border-radius: 3px;
  background: linear-gradient(#f8f8f8, #e6e6e6);
  box-shadow: inset 0 0 0 1px #dcdcdc;
}

.arrow {
  width: 0;
  height: 0;
}

.arrow.open {
  border-left: 6px solid transparent;
  border-bottom: 6px solid #2e2e2e;
}

.arrow.closed {
  position: relative;
  width: 6px;
  height: 10px;
  background: #9a9a9a;
  clip-path: polygon(0 0, 100% 50%, 0 100%);
}

.arrow.closed::after {
  content: '';
  position: absolute;
  inset: 2px 2px 2px 1px;
  background: #fff;
  clip-path: polygon(0 0, 100% 50%, 0 100%);
}

/* Scrollbars */
.hscroll {
  display: flex;
  align-items: center;
  flex: none;
  height: 17px;
  background: #f0f0f0;
}

.scroll-btn {
  display: flex;
  align-items: center;
  justify-content: center;
  width: 17px;
  height: 17px;
  flex: none;
}

.tri {
  border: 4px solid transparent;
}

.tri.left {
  border-left-width: 0;
  border-right-color: #333;
}

.tri.right {
  border-right-width: 0;
  border-left-color: #333;
}

.tri.up {
  border-top-width: 0;
  border-bottom-color: #333;
}

.tri.down {
  border-bottom-width: 0;
  border-top-color: #333;
}

.hthumb {
  display: flex;
  align-items: center;
  justify-content: center;
  gap: 2px;
  flex: 127;
  height: 15px;
  margin-left: 2px;
  border: 1px solid #979797;
  border-radius: 2px;
  background: linear-gradient(#f4f4f4, #e6e6e6 45%, #cfcfcf 50%, #dcdcdc);
}

.hthumb i {
  width: 1px;
  height: 7px;
  background: #555;
}

.htrack {
  flex: 25;
}

.vscroll {
  display: flex;
  flex-direction: column;
  align-items: center;
  flex: none;
  width: 16px;
  background: #f0f0f0;
  box-shadow: inset 1px 0 #fbfbfb;
}

.vtrack {
  flex: 79;
}

.vthumb {
  display: flex;
  flex-direction: column;
  align-items: center;
  justify-content: center;
  gap: 2px;
  flex: 467;
  width: 15px;
  border: 1px solid #979797;
  border-radius: 2px;
  background: linear-gradient(to right, #f4f4f4, #e6e6e6 45%, #c6c6c6 50%, #d6d6d6);
}

.vthumb i {
  width: 7px;
  height: 1px;
  background: #444;
}

/* Disk management */
.disk-pane {
  display: flex;
  flex-direction: column;
  flex: 1;
  min-width: 0;
  margin-bottom: 2px;
  border-top: 1px solid #a0a0a0;
  border-left: 1px solid #a0a0a0;
  border-right: 1px solid #e3e3e3;
  box-shadow: inset 1px 1px #696969;
  padding: 1px 0 0 1px;
}

.volume-list {
  flex: none;
  height: 301px;
  background: #fff;
}

.volume-list th {
  height: 19px;
  padding: 2px 0 0 6px;
  border-right: 2px solid #858585;
  border-bottom: 2px solid #858585;
  background: #f0f0f0;
  box-shadow: inset 1px 1px #fff;
  line-height: 16px;
}

.volume-list th.rest {
  border-right: 0;
}

.blackout {
  width: 81.8%;
  height: 112px;
  margin-left: 3px;
  background: #000;
}

.splitter {
  flex: none;
  height: 6px;
  border-top: 1px solid #fff;
  border-right: 1px solid #858585;
  border-bottom: 2px solid #7d7d7d;
  background: #f0f0f0;
}

.disk-view {
  display: flex;
  flex: 1;
  min-height: 0;
  overflow: hidden;
}

.disk-rows {
  flex: 1;
  min-width: 0;
  padding-top: 6px;
}

.disk {
  display: flex;
  height: 97px;
  margin-bottom: 2px;
}

.disk-label {
  display: flex;
  flex-direction: column;
  flex: none;
  width: 124px;
  padding: 7px 0 0 9px;
  border: solid;
  border-width: 1px 1px 1px 0;
  border-color: #fff #a0a0a0 #a0a0a0;
  line-height: 15px;
}

.disk-label strong {
  display: flex;
  gap: 1px;
}

.disk-label .icon {
  margin-top: -5px;
}

.disk-space {
  flex: 1;
}

.disk-box {
  display: flex;
  height: 97px;
  padding: 4px 3px 3px 0;
  border: 1px solid;
  border-color: #fff #a0a0a0 #a0a0a0 #fff;
}

.disk-box.empty {
  border-left: 0;
  border-right: 0;
}

.volume {
  display: flex;
  flex-direction: column;
  flex-basis: 0;
  min-width: 0;
}

.volume-bar {
  height: 14px;
  border-right: 1px solid #a0a0a0;
  border-bottom: 1px solid #a0a0a0;
}

.primary {
  background: #000080;
}

.free {
  background: #000;
}

.volume-body {
  flex: 1;
  padding: 2px 3px 3px;
  border-right: 1px solid #a0a0a0;
  border-bottom: 1px solid #a0a0a0;
}

.volume-text {
  display: flex;
  flex-direction: column;
  height: 100%;
  padding: 18px 0 0 3px;
  border-top: 1px solid #a0a0a0;
  border-left: 1px solid #a0a0a0;
  background: #fff;
  line-height: 15px;
  white-space: nowrap;
}

.legend {
  display: flex;
  align-items: center;
  flex: none;
  height: 20px;
  padding-left: 5px;
  border-top: 1px solid #fff;
  border-right: 1px solid #a0a0a0;
  border-bottom: 1px solid #a0a0a0;
}

.swatch {
  width: 11px;
  height: 13px;
  border-top: 1px solid #a0a0a0;
  border-left: 1px solid #a0a0a0;
}

.legend span {
  padding: 0 6px 0 5px;
}

/* Actions */
.action-pane {
  flex: none;
  width: 188px;
  margin: 0 0 1px 5px;
  border: 1px solid;
  border-color: #a0a0a0 #e3e3e3 #e3e3e3 #a0a0a0;
  box-shadow: inset 1px 1px #696969;
  padding: 1px 0 0 1px;
  background: #fff;
}

.action-pane h2 {
  height: 21px;
  padding: 2px 0 0 4px;
  border-top: 1px solid #fff;
  border-bottom: 2px solid #a0a0a0;
  background: #f0f0f0;
  font-weight: bold;
  line-height: 17px;
}

.action-pane button {
  display: flex;
  align-items: center;
  justify-content: space-between;
  width: 100%;
  height: 24px;
  padding: 0 6px;
}

.action-pane .action-head {
  height: 25px;
  background: linear-gradient(#bad2ec, #98b4d2);
}

.action-pane .action-item {
  padding-left: 30px;
}

.solid {
  border: 5px solid transparent;
}

.solid.up {
  border-top-width: 0;
  border-bottom-color: #000;
}

.solid.right {
  border-right-width: 0;
  border-left-color: #000;
}

/* Status bars */
.main-status,
.win-status {
  display: flex;
  flex: none;
  border-top: 1px solid #8e8e8e;
  background: #f1edec;
  box-shadow: inset 0 1px #fff;
}

.main-status {
  height: 23px;
  padding-right: 2px;
}

.main-status span,
.win-status span {
  flex: none;
  border-right: 1px solid #d7d3d2;
}

.main-status span {
  width: 133px;
}

.main-status span:first-child,
.win-status span:first-child {
  flex: 1;
}

.main-status span:last-child {
  width: 86px;
}

.win-status {
  height: 23px;
}

.win-status span {
  width: 133px;
}

.win-status span:last-child {
  width: 87px;
  border-right: 0;
}

/* Floating windows */
.window {
  position: absolute;
  border: 1px solid #23303e;
  border-radius: 7px;
}

.win-title {
  display: flex;
}

.window .client {
  border: 1px solid #5c6b7c;
  background: #f0f0f0;
}

.manager {
  left: 23px;
  top: 286px;
  width: 795px;
  padding: 0 6px 6px;
  background:
    linear-gradient(to right, transparent 161px, rgba(90, 120, 160, .35) 169px, transparent 179px),
    linear-gradient(to right, #cfe6fa, #b3d6f8 35%, #c3e0fa 60%, #b9dbfb);
  box-shadow: inset 0 0 0 1px #e8f5ff, 2px 3px 16px 3px rgba(0, 0, 0, .75);
}

.manager .win-title {
  height: 28px;
}

.manager .win-title .icon {
  margin: 6px 0 0 1px;
}

.manager .win-title h2 {
  padding: 5px 20px 0 5px;
}

.device-tree {
  margin: 6px 1px 2px 0;
  padding: 0 0 29px 3px;
  border: solid;
  border-width: 2px 1px 1px 2px;
  border-color: #757575 #e3e3e3 #e3e3e3 #858585;
  background: #fff;
}

.dots {
  background: repeating-linear-gradient(to right, #8a8a8a 0 1px, transparent 1px 2px) 9px 9px / 10px 1px no-repeat;
}

.guide {
  background: repeating-linear-gradient(to bottom, #8a8a8a 0 1px, transparent 1px 2px) 8px 0 / 1px 100% no-repeat;
}

.dots.guide {
  background:
    repeating-linear-gradient(to right, #8a8a8a 0 1px, transparent 1px 2px) 8px 9px / 11px 1px no-repeat,
    repeating-linear-gradient(to bottom, #8a8a8a 0 1px, transparent 1px 2px) 8px 0 / 1px 18px no-repeat;
}

.dots.guide.last {
  background-size: 11px 1px, 1px 9px;
}

/* White plate that interrupts the dotted line behind an expander */
.plate::before {
  content: '';
  width: 9px;
  height: 14px;
  margin-right: -8px;
  background: #fff;
}

.node.selected {
  border-radius: 3px;
  background: linear-gradient(#eaf3fd, #c4dcfa);
  box-shadow: 0 0 0 1px #84acdd inset;
}

.dialog {
  left: 828px;
  top: 396px;
  width: 414px;
  padding: 0 6px 6px;
  border-color: #4d5557;
  background:
    linear-gradient(transparent 188px, #9cc8ee 192px, #0a1470 199px 205px, #9cc8ee 212px, transparent 216px 287px, #9cc8ee 291px, #0a1470 298px 304px, #9cc8ee 311px, transparent 315px 386px, #9cc8ee 390px, #0a1470 397px 403px, #9cc8ee 410px, transparent 414px) left / 6px 100% no-repeat,
    linear-gradient(transparent 188px, #9cc8ee 192px, #0a1470 199px 205px, #9cc8ee 212px, transparent 216px 287px, #9cc8ee 291px, #0a1470 298px 304px, #9cc8ee 311px, transparent 315px 386px, #9cc8ee 390px, #0a1470 397px 403px, #9cc8ee 410px, transparent 414px) right / 6px 100% no-repeat,
    linear-gradient(#f3ffff, #eefafb 40%, #fff);
  box-shadow: 1px 2px 9px 1px rgba(0, 0, 0, .6);
}

.dialog .win-title {
  height: 28px;
}

.dialog .win-title h2 {
  padding: 5px 0 0 2px;
}

.dialog .client {
  padding: 7px 6px 8px;
  font: 11px/13px "Liberation Sans", Arial, sans-serif;
}

.tabs {
  display: flex;
  align-items: flex-end;
  padding-left: 2px;
}

.tabs button {
  height: 19px;
  margin-bottom: -1px;
  padding: 0 4px;
  border: 1px solid #8c8e94;
  background: linear-gradient(#f3f3f3, #ebebeb 50%, #dcdcdc 51%, #cfcfcf);
}

.tabs button + button {
  margin-left: -1px;
}

.tabs button.active {
  height: 21px;
  padding: 0 6px 2px;
  border-bottom: 0;
  background: #fff;
}

.tab-page {
  margin-right: 2px;
  padding: 13px 3px 27px 14px;
  border: 1px solid #8c8e94;
  background: #fff;
}

.tab-page p {
  white-space: nowrap;
}

.tab-page hr {
  height: 1px;
  margin: 8px 2px 5px 0;
  border: 0;
  background: #a0a0a0;
}

.tab-page dl {
  display: grid;
  grid-template-columns: 117px 1fr;
  line-height: 21px;
}

.tab-page h3 {
  margin: 12px 0 4px;
}

.dialog-list {
  height: 85px;
  padding: 1px;
  border: 1px solid #828790;
}

.dialog-list th {
  height: 23px;
  padding: 0 0 0 6px;
  border-right: 1px solid #dfe2e6;
  border-bottom: 1px solid #d5d5d5;
  background: linear-gradient(#fff 50%, #f3f4f6);
}

.dialog-list th:first-child {
  width: 239px;
}

.page-buttons,
.dialog-buttons {
  display: flex;
  justify-content: flex-end;
}

.page-buttons {
  gap: 12px;
  padding: 7px 1px 0 0;
}

.dialog-buttons {
  gap: 8px;
  padding: 9px 1px 0 0;
}

.page-buttons button,
.dialog-buttons button {
  width: 73px;
  height: 21px;
  border: 1px solid #707070;
  border-radius: 3px;
  background: linear-gradient(#f3f3f3, #ebebeb 48%, #dbdbdb 52%, #cfcfcf);
  box-shadow: inset 0 0 0 1px #fafafa;
}

.page-buttons button {
  width: 84px;
  border-color: #adb2b5;
  background: #f4f4f4;
  color: #838383;
}
</style>
